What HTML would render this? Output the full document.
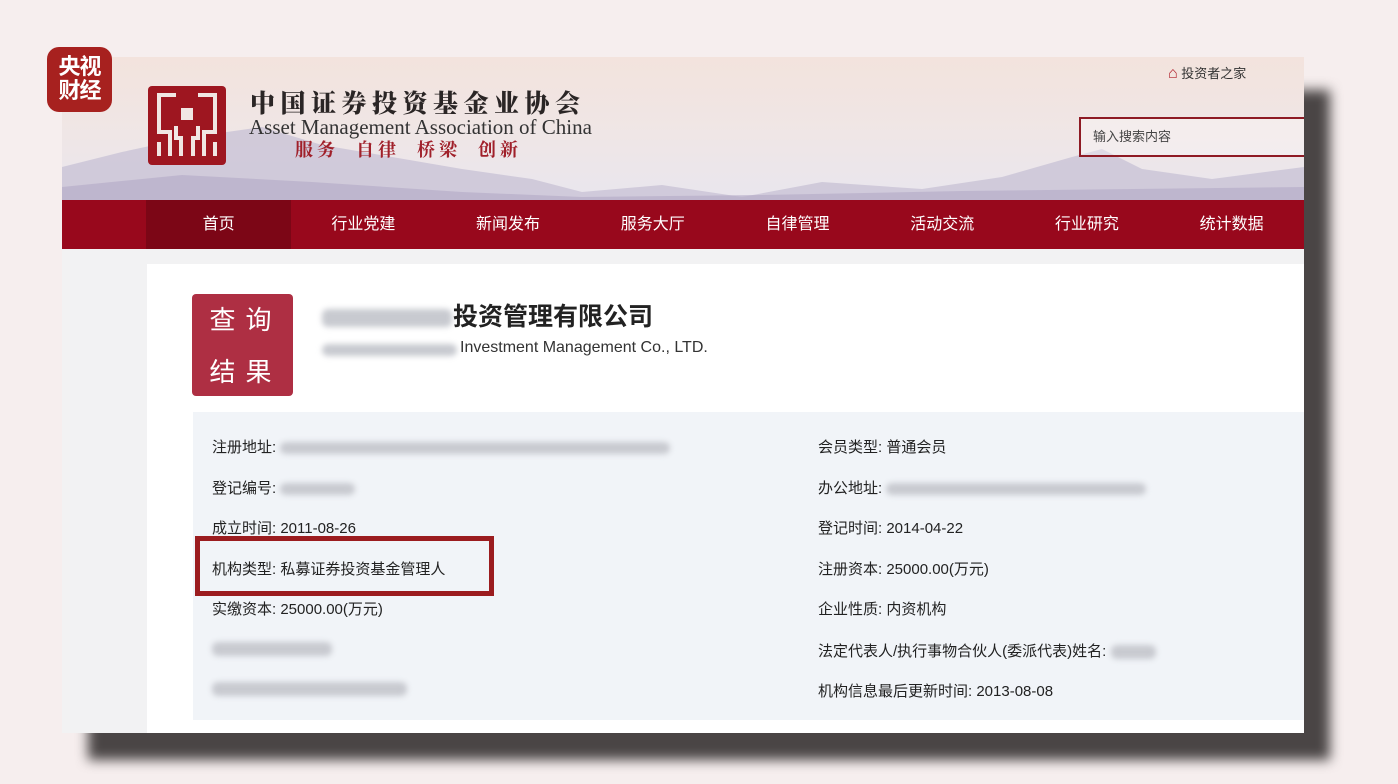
<!DOCTYPE html>
<html><head><meta charset="utf-8"><style>
*{margin:0;padding:0;box-sizing:border-box}
body{width:1398px;height:784px;background:#f6eeee;position:relative;overflow:hidden;font-family:"Liberation Sans","Noto Sans CJK SC",sans-serif;color:#222}
.shadow{position:absolute;left:88px;top:90px;width:1242px;height:670px;background:#4a4545;filter:blur(6px)}
.page{position:absolute;left:62px;top:57px;width:1242px;height:676px;background:#f2f2f3;overflow:hidden}
.hdr{position:absolute;left:0;top:0;width:1242px;height:143px;background:linear-gradient(180deg,#f3e3dd 0%,#efe6e6 55%,#e9e6ee 100%)}
.nav{position:absolute;left:0;top:143px;width:1242px;height:49px;background:#98081c;display:flex}
.nav div{width:146px;text-align:center;color:#fff;font-size:16px;line-height:49px}
.nav .act{background:#7c0616}
.content{position:absolute;left:85px;top:207px;width:1157px;height:469px;background:#fff}
.cctv{position:absolute;left:47px;top:47px;width:65px;height:65px;border-radius:12px;background:#a7211f;color:#fff;font-weight:bold;font-size:22px;line-height:24px;text-align:center;padding-top:8px;letter-spacing:-1px}
.info{position:absolute;left:46px;top:148px;width:1111px;height:308px;background:#f1f4f8}
.row{position:absolute;font-size:15px;color:#222;white-space:nowrap}
.blur{display:inline-block;height:12px;background:#c8cad0;border-radius:6px;filter:blur(3px);vertical-align:middle}
</style></head><body>
<div class="shadow"></div>
<div class="page">
 <div class="hdr">
  <svg width="1242" height="143" style="position:absolute;left:0;top:0">
   <path d="M0 110 L60 95 L130 80 L200 70 L260 88 L330 100 L400 112 L470 122 L520 135 L600 128 L680 140 L760 125 L860 132 L940 120 L1010 100 L1040 92 L1080 112 L1150 122 L1242 110 L1242 143 L0 143Z" fill="#c9c3d6" opacity=".8"/>
   <path d="M0 130 L120 118 L250 125 L400 135 L520 140 L700 138 L900 134 L1242 130 L1242 143 L0 143Z" fill="#b6aec9" opacity=".7"/>
  </svg>
  <svg style="position:absolute;left:86px;top:29px" width="78" height="79" viewBox="0 0 78 79">
   <rect x="0" y="0" width="78" height="79" rx="4" fill="#9e1620"/>
   <rect x="33" y="22" width="12" height="12" fill="#f1e6e3"/>
   <path d="M28 9 H11 V46 H22 V70 M11 56 V70" stroke="#f1e6e3" stroke-width="4" fill="none"/>
   <path d="M50 9 H67 V46 H56 V70 M67 56 V70" stroke="#f1e6e3" stroke-width="4" fill="none"/>
   <path d="M28 40 V52 H33 V70 M50 40 V52 H45 V70" stroke="#f1e6e3" stroke-width="4" fill="none"/>
  </svg>
  <div style="position:absolute;left:188px;top:30px;line-height:30px;font-family:'Noto Serif CJK SC',serif;font-weight:900;font-size:25px;letter-spacing:5.5px;color:#2a2525;white-space:nowrap">中国证券投资基金业协会</div>
  <div style="position:absolute;left:187px;top:60px;line-height:20px;font-family:'Liberation Serif',serif;font-size:21px;color:#333;white-space:nowrap">Asset Management Association of China</div>
  <div style="position:absolute;left:233px;top:81px;line-height:22px;font-family:'Noto Serif CJK SC',serif;font-weight:bold;font-size:18px;color:#a0202a;letter-spacing:4px;white-space:nowrap">服务&nbsp; 自律&nbsp; 桥梁&nbsp; 创新</div>
  <div style="position:absolute;left:1106px;top:6px;font-size:13px;color:#333"><span style="color:#b01f2a;font-size:16px">&#8962;</span> 投资者之家</div>
  <div style="position:absolute;left:1017px;top:60px;width:230px;height:40px;border:2px solid #8e1a24;background:rgba(255,255,255,.3);font-size:13px;color:#444;line-height:36px;padding-left:12px">输入搜索内容</div>
 </div>
 <div class="nav"><div style="width:85px"></div><div class="act">首页</div><div>行业党建</div><div>新闻发布</div><div>服务大厅</div><div>自律管理</div><div>活动交流</div><div>行业研究</div><div>统计数据</div></div>
 <div class="content">
  <div style="position:absolute;left:45px;top:30px;width:101px;height:102px;background:#ae2f43;border-radius:4px;color:#fff;font-size:26px;line-height:52px;text-align:center;letter-spacing:10px;padding-left:6px">查询<br>结果</div>
  <span class="blur" style="position:absolute;left:175px;top:45px;width:130px;height:18px"></span>
  <div style="position:absolute;left:306px;top:33px;font-size:25px;font-weight:bold;color:#222">投资管理有限公司</div>
  <span class="blur" style="position:absolute;left:175px;top:80px;width:135px;height:12px"></span>
  <div style="position:absolute;left:313px;top:75px;font-size:16px;color:#333">Investment Management Co., LTD.</div>
  <div class="info"></div>
 </div>
</div>
<div class="row" style="left:212px;top:436px">注册地址: <span class="blur" style="width:390px"></span></div>
<div class="row" style="left:212px;top:477px">登记编号: <span class="blur" style="width:75px"></span></div>
<div class="row" style="left:212px;top:517px">成立时间: 2011-08-26</div>
<div class="row" style="left:212px;top:558px">机构类型: 私募证券投资基金管理人</div>
<div style="position:absolute;left:195px;top:536px;width:299px;height:60px;border:5px solid #9b1c1f"></div>
<div class="row" style="left:212px;top:598px">实缴资本: 25000.00(万元)</div>
<div class="row" style="left:212px;top:640px"><span class="blur" style="width:120px;height:14px"></span></div>
<div class="row" style="left:212px;top:680px"><span class="blur" style="width:195px;height:14px"></span></div>
<div class="row" style="left:818px;top:436px">会员类型: 普通会员</div>
<div class="row" style="left:818px;top:477px">办公地址: <span class="blur" style="width:260px"></span></div>
<div class="row" style="left:818px;top:517px">登记时间: 2014-04-22</div>
<div class="row" style="left:818px;top:558px">注册资本: 25000.00(万元)</div>
<div class="row" style="left:818px;top:598px">企业性质: 内资机构</div>
<div class="row" style="left:818px;top:640px">法定代表人/执行事物合伙人(委派代表)姓名: <span class="blur" style="width:45px;height:14px"></span></div>
<div class="row" style="left:818px;top:680px">机构信息最后更新时间: 2013-08-08</div>
<div class="cctv">央视<br>财经</div>
</body></html>
